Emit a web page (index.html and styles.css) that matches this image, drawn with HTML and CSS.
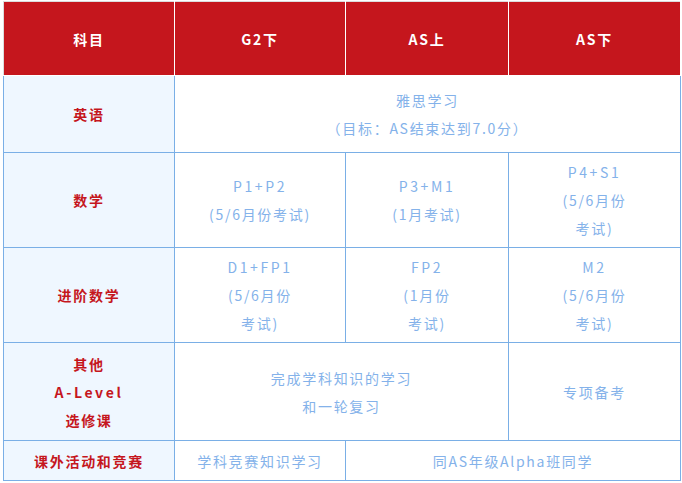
FILE: index.html
```html
<!DOCTYPE html>
<html lang="zh">
<head>
<meta charset="utf-8">
<link rel="stylesheet" href="styles.css">
</head>
<body>
<div class="wrap">
<table class="plan">
  <colgroup>
    <col class="c1"><col class="c2"><col class="c3"><col class="c4">
  </colgroup>
  <thead>
    <tr class="r-head">
      <th>科目</th><th>G2下</th><th>AS上</th><th>AS下</th>
    </tr>
  </thead>
  <tbody>
    <tr class="r-eng">
      <td class="subj">英语</td>
      <td colspan="3">雅思学习<br>（目标：AS结束达到7.0分）</td>
    </tr>
    <tr class="r-math">
      <td class="subj">数学</td>
      <td><span class="lat">P1+P2</span><br>(5/6月份考试)</td>
      <td><span class="lat">P3+M1</span><br>(1月考试)</td>
      <td><span class="lat">P4+S1</span><br>(5/6月份<br>考试)</td>
    </tr>
    <tr class="r-adv">
      <td class="subj">进阶数学</td>
      <td><span class="lat">D1+FP1</span><br>(5/6月份<br>考试)</td>
      <td><span class="lat">FP2</span><br>(1月份<br>考试)</td>
      <td><span class="lat">M2</span><br>(5/6月份<br>考试)</td>
    </tr>
    <tr class="r-other">
      <td class="subj">其他<br><span class="lat">A-Level</span><br>选修课</td>
      <td colspan="2">完成学科知识的学习<br>和一轮复习</td>
      <td>专项备考</td>
    </tr>
    <tr class="r-extra">
      <td class="subj">课外活动和竞赛</td>
      <td>学科竞赛知识学习</td>
      <td colspan="2">同AS年级Alpha班同学</td>
    </tr>
  </tbody>
</table>
</div>
</body>
</html>
```

FILE: styles.css
```css
html, body {
  margin: 0;
  padding: 0;
  background: #ffffff;
}
.wrap {
  padding: 1px 0 0 3px;
}
.plan {
  border-collapse: collapse;
  table-layout: fixed;
  width: 677px;
  font-family: "Noto Sans CJK SC", "Noto Sans", sans-serif;
  font-size: 14px;
  letter-spacing: 1.7px;
  line-height: 28px;
  text-align: center;
}
.c1 { width: 171px; }
.c2 { width: 171px; }
.c3 { width: 163px; }
.c4 { width: 172px; }
.plan th {
  background: #c5161d;
  color: #ffffff;
  font-weight: 700;
  border: 1px solid #ffffff;
  border-top-color: #dcdcdc;
  padding: 0;
  vertical-align: middle;
}
.plan th:first-child {
  border-left-color: #dcdcdc;
}
.plan td {
  border: 1px solid #7aafe6;
  color: #84b2ea;
  padding: 0;
  vertical-align: middle;
}
.plan td.subj {
  background: #eff7ff;
  color: #c5161d;
  font-weight: 700;
}
.lat {
  letter-spacing: 2.6px;
}
.r-head { height: 74px; }
.r-eng { height: 77px; }
.r-math { height: 95px; }
.r-adv { height: 95px; }
.r-other { height: 98px; }
.r-extra { height: 40px; }
```
